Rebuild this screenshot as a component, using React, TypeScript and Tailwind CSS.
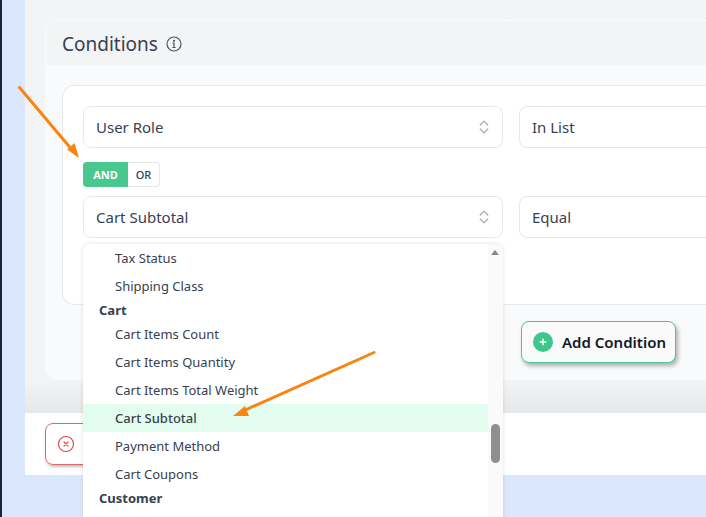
const font = "font-['Noto_Sans',sans-serif]";

function Chevrons() {
  return (
    <svg width="10" height="14" viewBox="0 0 10 14" fill="none" stroke="#a3a9b3" strokeWidth="1.2" strokeLinecap="round" strokeLinejoin="round">
      <path d="M1.2 5 5 1.2 8.8 5" />
      <path d="M1.2 9 5 12.8 8.8 9" />
    </svg>
  );
}

function FieldSelect({ label }: { label: string }) {
  return (
    <div className="flex h-[42px] w-[420px] shrink-0 items-center justify-between rounded-lg border border-[#e5e7eb] bg-white pl-3 pr-[13px] text-[15px] text-[#374151]">
      <span>{label}</span>
      <Chevrons />
    </div>
  );
}

function OperatorSelect({ label }: { label: string }) {
  return (
    <div className="flex h-[42px] w-[300px] shrink-0 items-center rounded-lg border border-[#e5e7eb] bg-white pl-3 text-[15px] text-[#374151]">
      {label}
    </div>
  );
}

const options = [
  { label: 'Tax Status' },
  { label: 'Shipping Class' },
  { label: 'Cart', group: true },
  { label: 'Cart Items Count' },
  { label: 'Cart Items Quantity' },
  { label: 'Cart Items Total Weight' },
  { label: 'Cart Subtotal', active: true },
  { label: 'Payment Method' },
  { label: 'Cart Coupons' },
  { label: 'Customer', group: true },
];

function Dropdown() {
  return (
    <div className="absolute left-[83px] top-[244px] flex h-[280px] w-[420px] overflow-hidden rounded-t-md bg-white shadow-[0_0_4px_rgba(0,0,0,0.12)]">
      <div className="w-[405px]">
        {options.map((o) =>
          o.group ? (
            <div key={o.label} className="flex h-[20px] items-center pl-4 pt-px text-[13px] font-bold text-[#374151]">
              {o.label}
            </div>
          ) : (
            <div
              key={o.label}
              className={`flex h-[28px] items-center pl-8 pt-px text-[13px] text-[#374151] ${o.active ? 'bg-[#e2fdf0] font-medium' : ''}`}
            >
              {o.label}
            </div>
          ),
        )}
      </div>
      <div className="relative w-[15px] bg-[#fafafa]">
        <div className="absolute left-[3px] top-[6px] h-0 w-0 border-x-[4.5px] border-b-[5px] border-x-transparent border-b-[#8a8a8a]" />
        <div className="absolute left-[3px] top-[180px] h-[39px] w-[9px] rounded-full bg-[#8f8f8f]" />
      </div>
    </div>
  );
}

export default function App() {
  return (
    <div className={`relative flex h-[517px] w-[706px] overflow-hidden bg-[#dbe7fd] ${font}`}>
      <div className="w-[2px] shrink-0 bg-[#1d2333]" />
      <div className="w-[23px] shrink-0" />
      <div className="min-w-0 flex-1">
        <div className="h-[413px] bg-gradient-to-b from-[#f3f4f6] from-[92%] to-[#e6e7e8] pl-5 pt-5">
          <div className="h-[360px] w-[800px] overflow-hidden rounded-l-xl border border-[#fafbfc] bg-[#f9fafb]">
            <div className="flex h-[44px] items-center gap-[8px] bg-[#f3f4f6] pb-px pl-4 pt-[3px] text-[19px] text-[#374151]">
              <span>Conditions</span>
              <svg width="16" height="16" viewBox="0 0 16 16" fill="none" stroke="#4b5563" strokeWidth="1.2">
                <circle cx="8" cy="8" r="7" />
                <path d="M8 7v4.5M6.8 11.5h2.4M6.9 7h1.1" strokeLinecap="round" />
                <circle cx="8" cy="4.8" r="0.5" fill="#4b5563" />
              </svg>
            </div>
            <div className="ml-4 mt-5 h-[220px] rounded-l-xl border border-[#e5e7eb] bg-white pl-5 pt-5">
              <div className="flex gap-4">
                <FieldSelect label="User Role" />
                <OperatorSelect label="In List" />
              </div>
              <div className="mt-[14px] flex h-[25px] w-[77px] text-[11px]">
                <div className="flex w-[45px] items-center justify-center rounded-l bg-[#48c78e] pt-px font-bold text-white">AND</div>
                <div className="flex flex-1 items-center justify-center rounded-r border border-l-0 border-[#e5e7eb] pt-px font-medium text-[#374151]">OR</div>
              </div>
              <div className="mt-[9px] flex gap-4">
                <FieldSelect label="Cart Subtotal" />
                <OperatorSelect label="Equal" />
              </div>
            </div>
            <div className="ml-[475px] mt-4 flex h-[42px] w-[155px] items-center gap-[9px] rounded-lg border border-[#48c78e] bg-[#fafafa] pl-[11px] text-[15px] font-semibold text-[#111827] shadow-[2px_3px_4px_rgba(0,0,0,0.3)]">
              <svg width="20" height="20" viewBox="0 0 20 20" fill="none">
                <circle cx="10" cy="10" r="10" fill="#3fc68a" />
                <path d="M10 7.2v5.6M7.2 10h5.6" stroke="#ffffff" strokeWidth="1.5" strokeLinecap="round" />
              </svg>
              <span>Add Condition</span>
            </div>
          </div>
        </div>
        <div className="h-[62px] bg-white pl-5 pt-[10px]">
          <div className="flex h-[42px] w-[100px] items-center rounded-lg border border-[#dc6a6a] pl-[11px] shadow-[1px_2px_3px_rgba(0,0,0,0.25)]">
            <svg width="18" height="18" viewBox="0 0 18 18" fill="none" stroke="#dc4c4c" strokeWidth="1.2" strokeLinecap="round">
              <circle cx="9" cy="9" r="7.5" />
              <path d="M7 7l4 4M11 7l-4 4" />
            </svg>
          </div>
        </div>
      </div>
      <Dropdown />
      <svg className="pointer-events-none absolute left-0 top-0" width="706" height="517" fill="none">
        <path d="M19.5 87.5 73 151" stroke="#f98412" strokeWidth="3" strokeLinecap="round" />
        <path d="M79 158 67 149.5 74.5 143Z" fill="#f98412" />
        <path d="M374 352.5 243 411" stroke="#f98412" strokeWidth="3" strokeLinecap="round" />
        <path d="M233 416 245 406 249 416Z" fill="#f98412" />
      </svg>
    </div>
  );
}
